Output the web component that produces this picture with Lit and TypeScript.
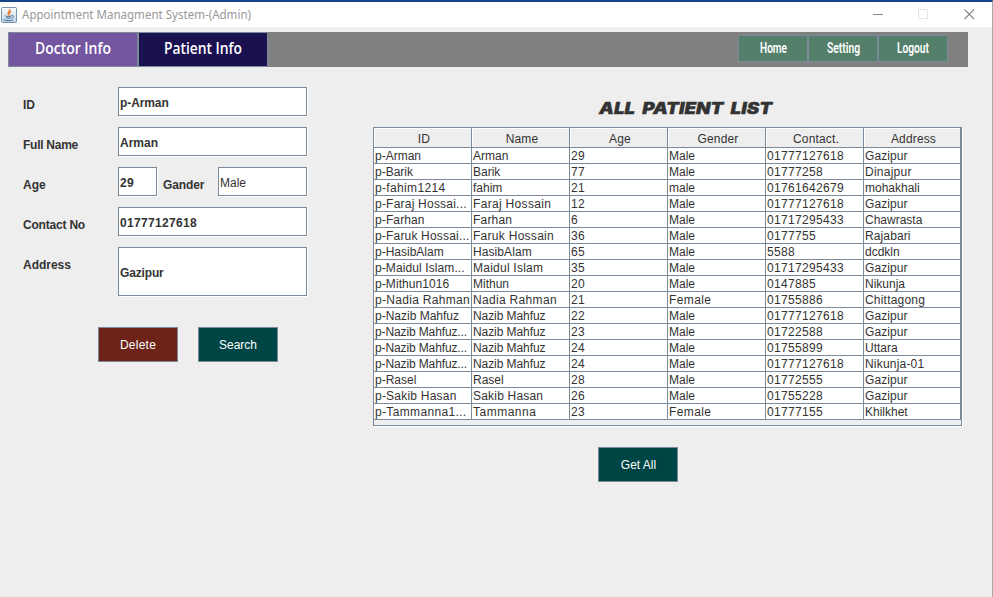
import { LitElement, html, css, svg } from "lit";
import { customElement, property } from "lit/decorators.js";
import { styleMap } from "lit/directives/style-map.js";

/* A label stretched to an exact width, for display faces. */
@customElement("fit-label")
class FitLabel extends LitElement {
  @property() text = "";
  @property({ type: Number }) width = 50;
  @property({ type: Number }) height = 20;
  @property({ type: Number }) baseline = 15;
  static styles = css`
    :host { display: block; }
    svg { display: block; overflow: visible; }
    text { fill: currentColor; }
  `;
  render() {
    return html`<svg width=${this.width} height=${this.height}>
      ${svg`<text x="0" y=${this.baseline} textLength=${this.width} lengthAdjust="spacingAndGlyphs">${this.text}</text>`}
    </svg>`;
  }
}

const columns = ["ID", "Name", "Age", "Gender", "Contact.", "Address"];

const patients = [
  ["p-Arman", "Arman", "29", "Male", "01777127618", "Gazipur"],
  ["p-Barik", "Barik", "77", "Male", "01777258", "Dinajpur"],
  ["p-fahim1214", "fahim", "21", "male", "01761642679", "mohakhali"],
  ["p-Faraj Hossai...", "Faraj Hossain", "12", "Male", "01777127618", "Gazipur"],
  ["p-Farhan", "Farhan", "6", "Male", "01717295433", "Chawrasta"],
  ["p-Faruk Hossai...", "Faruk Hossain", "36", "Male", "0177755", "Rajabari"],
  ["p-HasibAlam", "HasibAlam", "65", "Male", "5588", "dcdkln"],
  ["p-Maidul Islam...", "Maidul Islam", "35", "Male", "01717295433", "Gazipur"],
  ["p-Mithun1016", "Mithun", "20", "Male", "0147885", "Nikunja"],
  ["p-Nadia Rahman", "Nadia Rahman", "21", "Female", "01755886", "Chittagong"],
  ["p-Nazib Mahfuz", "Nazib Mahfuz", "22", "Male", "01777127618", "Gazipur"],
  ["p-Nazib Mahfuz...", "Nazib Mahfuz", "23", "Male", "01722588", "Gazipur"],
  ["p-Nazib Mahfuz...", "Nazib Mahfuz", "24", "Male", "01755899", "Uttara"],
  ["p-Nazib Mahfuz...", "Nazib Mahfuz", "24", "Male", "01777127618", "Nikunja-01"],
  ["p-Rasel", "Rasel", "28", "Male", "01772555", "Gazipur"],
  ["p-Sakib Hasan", "Sakib Hasan", "26", "Male", "01755228", "Gazipur"],
  ["p-Tammanna1...", "Tammanna", "23", "Female", "01777155", "Khilkhet"],
];

/* Tracking in px for strings whose advances round away from the natural ones. */
const tracking: Record<string, number> = {
  "Nadia Rahman": 0.32, "p-Nadia Rahman": 0.3, "Faraj Hossain": 0.32, "Faruk Hossain": 0.28,
  "p-Faraj Hossai...": 0.22, "p-Faruk Hossai...": 0.18, "Farhan": 0.2, "p-Farhan": 0.12,
  "Maidul Islam": 0.24, "p-Maidul Islam...": 0.1, "p-Mithun1016": 0.08, "HasibAlam": 0.08,
  "Tammanna": 0.5, "p-Tammanna1...": 0.34, "p-fahim1214": 0.34, "Sakib Hasan": 0.2,
  "p-Sakib Hasan": 0.22, "Female": 0.38, "Chittagong": 0.2, "Dinajpur": 0.25, "Rajabari": 0.12,
  "Nikunja-01": 0.2, "Nazib Mahfuz": -0.08, "p-Nazib Mahfuz...": -0.12, "Gazipur": 0.08,
};

function spacing(value: string): number {
  return /^\d+$/.test(value) ? 0.33 : tracking[value] ?? 0;
}

@customElement("app-root")
class AppRoot extends LitElement {
  static styles = css`
    :host {
      display: block; width: 993px; height: 597px; overflow: hidden;
      box-sizing: border-box; background: #eee; color: #333;
      border-top: 2px solid #17478a; border-right: 1px solid #a8a8a8;
      font: 12px/16px "Liberation Sans", Arial, sans-serif;
    }
    * { box-sizing: border-box; }
    .title { height: 25px; background: #fff; display: flex; align-items: center; padding-left: 1px; color: #999; }
    .title fit-label { margin-left: 5px; font: 12px "Noto Sans", "Open Sans", sans-serif; }
    .controls { margin-left: auto; margin-right: 17px; display: flex; gap: 35px; }
    .controls svg { display: block; }
    .controls .minimize { margin-right: -1px; }
    .nav { margin: 5px 0 0 8px; width: 960px; height: 35px; background: #808080; display: flex; color: #fff; }
    .tab { width: 130px; height: 35px; border: 1px solid #7a8a99; display: flex; justify-content: center; padding-top: 4px;
      font: 600 15.5px "Open Sans", "Noto Sans", sans-serif; }
    .doctor { background: #7355a0; }
    .patient { background: #1b1150; }
    .actions { margin: 3px 20px 0 auto; display: flex; }
    .action { width: 70px; height: 27px; background: #537f6b; border: 1px solid #7a8a99; display: flex; justify-content: center;
      padding-top: 3px; font: 600 14px Roboto, sans-serif; }
    .main { display: flex; }
    .form { width: 300px; margin-left: 23px; padding-top: 20px; }
    .row { display: flex; height: 40px; font-weight: bold; }
    .label { width: 95px; padding-top: 10px; white-space: nowrap; letter-spacing: -.03px; }
    .label.name { letter-spacing: -.26px; }
    .label.contact { letter-spacing: -.2px; }
    .label.mid { width: 61px; padding-left: 6px; letter-spacing: -.12px; }
    .field { height: 29px; width: 189px; background: #fff; border: 1px solid #7a8a99; box-shadow: 1px 1px 0 #fff;
      display: flex; align-items: center; padding: 2px 0 0 1px; }
    .field.age { width: 39px; }
    .field.gender { width: 89px; font-weight: normal; }
    .field.tall { height: 49px; }
    .field.num { letter-spacing: .33px; }
    .field.id { letter-spacing: -.1px; }
    .field.tall { letter-spacing: -.15px; }
    .buttons { display: flex; gap: 20px; margin: 40px 0 0 75px; }
    .button { width: 80px; height: 35px; border: 1px solid #7a8a99; background: #004545; color: #fff; display: flex;
      align-items: center; justify-content: center; }
    .danger { background: #6d2317; letter-spacing: .25px; }
    .list { margin: 34px 0 0 50px; width: 589px; }
    .heading { margin: 0 0 0 226px; color: #333; font: italic 900 16px Inter, sans-serif; word-spacing: 3px;
      stroke: #333; stroke-width: .4px; }
    .pane { margin-top: 10px; height: 299px; border: 1px solid #7a8a99; box-shadow: 1px 1px 0 #fff; }
    .grid { display: grid; grid-template-columns: repeat(5, 98px) 97px; }
    .head { height: 20px; border-right: 1px solid #7a8a99; border-bottom: 1px solid #7a8a99; box-shadow: inset 1px 1px 0 #fff;
      text-align: center; padding: 3px 0 0 3px; letter-spacing: .15px; }
    .cell { height: 16px; background: #fff; border-right: 1px solid #7a8a99; border-bottom: 1px solid #7a8a99;
      padding-left: 1px; line-height: 16px; white-space: nowrap; overflow: hidden; }
    .getall { margin: 21px 0 0 225px; padding-left: 1px; }
  `;
  render() {
    return html`
      <div class="title">
        <svg width="16" height="16" viewBox="0 0 16 16">
          <defs><linearGradient id="g" x2="0" y2="1"><stop stop-color="#fff"/><stop offset="1" stop-color="#b9cfe0"/></linearGradient></defs>
          <rect x=".5" y=".5" width="15" height="15" rx="1" fill="url(#g)" stroke="#7894ad"/>
          <path d="M8.7 1.8C10 3.6 5.8 4.8 7.3 7.2L8.1 8.4M10.2 4.4C8.2 5.4 8 6.2 8.8 7.5" fill="none" stroke="#ef7a26" stroke-width="1.2"/>
          <path d="M4.2 8.8C5.5 9.8 9 9.6 10.5 8.8M5 10.7C6.6 11.5 9 11.3 10.2 10.7M10.9 8.6C13.3 8.1 13 10.4 10.7 11M3.2 12.2C2.2 14 11.2 14.1 12 12.6" fill="none" stroke="#416f99" stroke-width="1"/>
        </svg>
        <fit-label text="Appointment Managment System-(Admin)" width="229" height="18" baseline="13"></fit-label>
        <div class="controls">
          <svg class="minimize" width="11" height="11"><path d="M0 5.5H10" stroke="#888"/></svg>
          <svg width="11" height="11"><rect x=".5" y=".5" width="9" height="9" fill="none" stroke="#e3e3e3"/></svg>
          <svg width="11" height="11"><path d="M.5 .5L10 10M10 .5L.5 10" stroke="#888" stroke-width="1.1"/></svg>
        </div>
      </div>
      <div class="nav">
        <div class="tab doctor"><fit-label text="Doctor Info" width="76" height="24" baseline="17"></fit-label></div>
        <div class="tab patient"><fit-label text="Patient Info" width="78" height="24" baseline="17"></fit-label></div>
        <div class="actions">
          <div class="action"><fit-label text="Home" width="27" height="20" baseline="14"></fit-label></div>
          <div class="action"><fit-label text="Setting" width="33" height="20" baseline="14"></fit-label></div>
          <div class="action"><fit-label text="Logout" width="32" height="20" baseline="14"></fit-label></div>
        </div>
      </div>
      <div class="main">
        <div class="form">
          <div class="row"><div class="label">ID</div><div class="field id">p-Arman</div></div>
          <div class="row"><div class="label name">Full Name</div><div class="field">Arman</div></div>
          <div class="row"><div class="label">Age</div><div class="field age num">29</div>
            <div class="label mid">Gander</div><div class="field gender">Male</div></div>
          <div class="row"><div class="label contact">Contact No</div><div class="field num">01777127618</div></div>
          <div class="row"><div class="label">Address</div><div class="field tall">Gazipur</div></div>
          <div class="buttons"><div class="button danger">Delete</div><div class="button">Search</div></div>
        </div>
        <div class="list">
          <div class="heading"><fit-label text="ALL PATIENT LIST" width="173" height="16" baseline="13"></fit-label></div>
          <div class="pane"><div class="grid">
            ${columns.map((c) => html`<div class="head">${c}</div>`)}
            ${patients.map((p) => p.map((v) => html`<div class="cell" style=${styleMap({ letterSpacing: spacing(v) + "px" })}>${v}</div>`))}
          </div></div>
          <div class="button getall">Get All</div>
        </div>
      </div>`;
  }
}
